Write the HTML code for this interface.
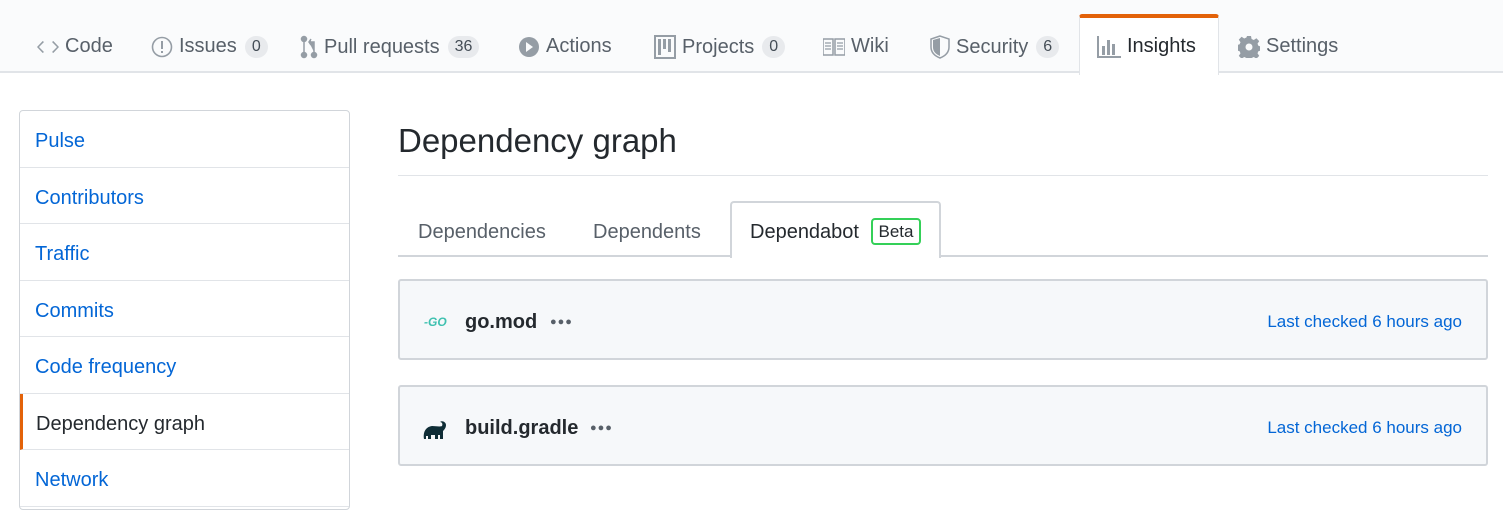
<!DOCTYPE html>
<html><head><style>
*{box-sizing:border-box;margin:0;padding:0}
body{width:1503px;height:491px;overflow:hidden;background:#fff;font-family:"Liberation Sans",sans-serif;color:#24292e;position:relative}
.nav{position:absolute;left:0;top:0;width:1503px;height:73px;background:#fafbfc;border-bottom:2px solid #e1e4e8}
.ni{position:absolute;top:35px;font-size:20px;color:#586069;display:flex;align-items:center;gap:6px;white-space:nowrap}
.ni svg{fill:#959da5}
.cnt{background:#e8eaed;border-radius:12px;font-size:16px;padding:2px 7px;color:#444d56;margin-left:2px}
.ins{position:absolute;left:1079px;top:14px;width:140px;height:61px;background:#fff;border:1px solid #e1e4e8;border-top:4px solid #e36209;border-bottom:none;border-radius:3px 3px 0 0}
.side{position:absolute;left:19px;top:110px;width:331px;height:400px;border:1px solid #d1d5da;border-radius:4px}
.si{height:56.5px;border-bottom:1px solid #e1e4e8;font-size:20px;color:#0366d6;padding:19px 15px 0}
.si.sel{color:#24292e;border-left:3px solid #e36209;padding-left:13px}
h1{position:absolute;left:398px;top:122px;font-size:33px;font-weight:normal;color:#24292e}
.hr{position:absolute;left:398px;top:175px;width:1090px;height:1px;background:#e1e4e8}
.tabs{position:absolute;left:398px;top:255px;width:1090px;height:2px;background:#d1d5da}
.t{position:absolute;top:221px;font-size:20px;color:#586069}
.dtab{position:absolute;left:730px;top:201px;width:211px;height:57px;background:#fff;border:2px solid #d1d5da;border-bottom:none;border-radius:4px 4px 0 0}
.beta{position:absolute;left:871px;top:218px;width:50px;height:27px;border:2px solid #34d058;border-radius:4px;font-size:17px;text-align:center;line-height:23px;color:#24292e}
.box{position:absolute;left:398px;width:1090px;height:81px;background:#f6f8fa;border:2px solid #d1d5da;border-radius:3px}
.fn{position:absolute;left:65px;font-size:20px;font-weight:bold;top:30px}
.dots{position:absolute;font-size:11px;color:#586069;top:35px;letter-spacing:1px}
.lc{position:absolute;right:24px;top:31px;font-size:17px;color:#0366d6}
</style></head><body>
<div class="nav"></div>
<div class="ins"></div>
<div class="ni" style="left:37px"><svg width="22" height="16" viewBox="0 0 22 16"><path d="M7 3L2 8l5 5-1.3 1L0 8l5.7-6zM15 3l5 5-5 5 1.3 1L22 8l-5.7-6z"/></svg>Code</div>
<div class="ni" style="left:151px"><svg width="22" height="22" viewBox="0 0 22 22"><circle cx="11" cy="11" r="9.5" fill="none" stroke="#959da5" stroke-width="1.6"/><rect x="10" y="5" width="2" height="8"/><rect x="10" y="15" width="2" height="2"/></svg>Issues<span class="cnt">0</span></div>
<div class="ni" style="left:300px"><svg width="18" height="24" viewBox="0 0 18 24" fill="none" stroke="#959da5" stroke-width="1.5"><circle cx="4" cy="4" r="2.5"/><circle cx="4" cy="20" r="2.5"/><circle cx="14" cy="20" r="2.5"/><path d="M4 7v10M14 17V7H9M11 4l-2 3 2 3"/></svg>Pull requests<span class="cnt">36</span></div>
<div class="ni" style="left:518px"><svg width="22" height="22" viewBox="0 0 22 22"><circle cx="11" cy="11" r="10"/><path d="M8 6l7 5-7 5z" fill="#fafbfc"/></svg>Actions</div>
<div class="ni" style="left:654px"><svg width="22" height="24" viewBox="0 0 22 24"><path d="M0 0h22v24H0z M2 2v20h18V2z"/><rect x="4" y="4" width="3" height="16"/><rect x="9" y="4" width="3" height="10"/><rect x="14" y="4" width="3" height="13"/></svg>Projects<span class="cnt">0</span></div>
<div class="ni" style="left:823px"><svg width="22" height="18" viewBox="0 0 22 18"><path d="M0 1h10v16H0zM12 1h10v16H12z" fill="none" stroke="#959da5" stroke-width="1.5"/><path d="M2 5h6M2 8h6M2 11h6M14 5h6M14 8h6M14 11h6" stroke="#959da5" stroke-width="1.2"/></svg>Wiki</div>
<div class="ni" style="left:930px"><svg width="20" height="24" viewBox="0 0 20 24"><path d="M10 1L1 4v8c0 6 4 9 9 11 5-2 9-5 9-11V4z" fill="none" stroke="#959da5" stroke-width="1.5"/><path d="M10 3v18c-4-2-7-4-7-9V5z"/></svg>Security<span class="cnt">6</span></div>
<div class="ni" style="left:1097px;color:#24292e"><svg width="24" height="22" viewBox="0 0 24 22" fill="#24292e"><rect x="0" y="0" width="2" height="22"/><rect x="0" y="20" width="24" height="2"/><rect x="5" y="10" width="3" height="9"/><rect x="10" y="4" width="3" height="15"/><rect x="15" y="8" width="3" height="11"/></svg>Insights</div>
<div class="ni" style="left:1238px"><svg width="22" height="22" viewBox="0 0 22 22"><path d="M9 0h4l.6 3 2.2 1 2.6-1.7 2.8 2.8-1.7 2.6 1 2.2 3 .6v4l-3 .6-1 2.2 1.7 2.6-2.8 2.8-2.6-1.7-2.2 1-.6 3H9l-.6-3-2.2-1-2.6 1.7-2.8-2.8 1.7-2.6-1-2.2-3-.6V9l3-.6 1-2.2L.8 3.6 3.6.8l2.6 1.7 2.2-1z"/><circle cx="11" cy="11" r="3.5" fill="#fafbfc"/></svg>Settings</div>

<div class="side">
<div class="si">Pulse</div>
<div class="si">Contributors</div>
<div class="si">Traffic</div>
<div class="si">Commits</div>
<div class="si">Code frequency</div>
<div class="si sel">Dependency graph</div>
<div class="si">Network</div>
</div>

<h1>Dependency graph</h1>
<div class="hr"></div>
<div class="tabs"></div>
<div class="dtab"></div>
<div class="t" style="left:418px">Dependencies</div>
<div class="t" style="left:593px">Dependents</div>
<div class="t" style="left:750px;color:#24292e">Dependabot</div>
<div class="beta">Beta</div>

<div class="box" style="top:279px">
<div style="position:absolute;left:24px;top:34px;font-size:12px;font-weight:bold;font-style:italic;color:#3fc1b0">-GO</div>
<div class="fn">go.mod</div><div class="dots" style="left:150px">●●●</div>
<div class="lc">Last checked 6 hours ago</div></div>
<div class="box" style="top:385px">
<svg style="position:absolute;left:22px;top:32px" width="26" height="22" viewBox="0 0 26 22"><path d="M2 20c-1-6 1-12 8-13 4 0 8 1 10 0 1-2 0-4-2-4 2-2 6 0 6 3 0 3-2 5-3 6v8h-3v-4h-2v4h-3v-4h-4v4H6v-3H4v3z" fill="#0f2d36"/></svg>
<div class="fn">build.gradle</div><div class="dots" style="left:190px">●●●</div>
<div class="lc">Last checked 6 hours ago</div></div>
</body></html>
